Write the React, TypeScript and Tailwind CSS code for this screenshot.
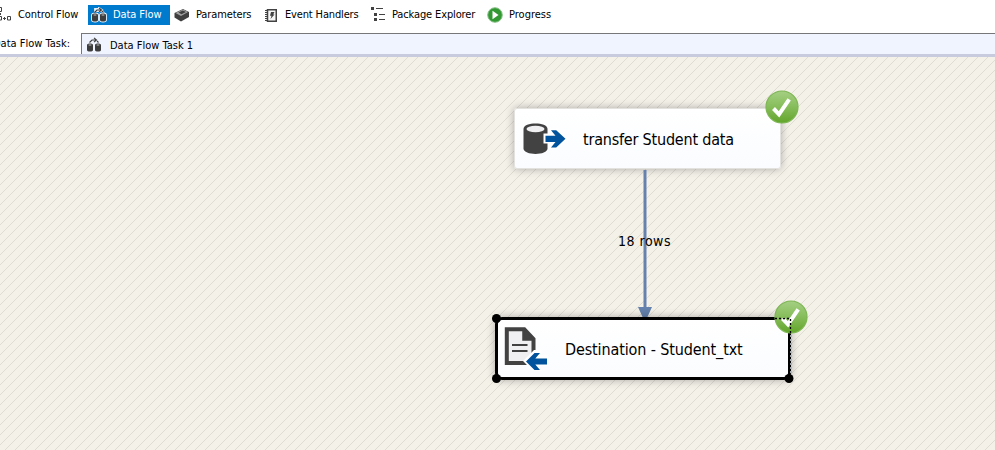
import type { ReactNode } from "react";

function ControlFlowIcon() {
  return (
    <svg width="12" height="18" viewBox="0 0 12 18" className="block shrink-0" fill="none" stroke="#424242">
      <path d="M-2 1.500H1.500v4H-2M7.500 10.500h3v3.500h-3zM-2 10.500H1.500v3.500H-2M3 12.500h3M4.500 11v3M.5 7v2" />
    </svg>
  );
}

function DataFlowIcon({ light = false }: { light?: boolean }) {
  return (
    <svg width="16" height="16" viewBox="0 0 16 16" className="block shrink-0">
      {light && (
        <path
          d="M1 8c0-2 6-2 6 0v5c0 2-6 2-6 0zM9 8c0-2 6-2 6 0v5c0 2-6 2-6 0zM4 5V2h4V1l3 2-3 2M11 4l2 2"
          fill="#e8f2fb"
          stroke="#e8f2fb"
          strokeWidth="1.800"
        />
      )}
      <path d="M1 8c0-2 6-2 6 0v5c0 2-6 2-6 0zM9 8c0-2 6-2 6 0v5c0 2-6 2-6 0z" fill="#3d3d3d" />
      <path d="M2 8c1-.8 3-.8 4 0-1 .6-3 .6-4 0zM10 8c1-.8 3-.8 4 0-1 .6-3 .6-4 0z" fill="#e4e4e4" />
      <path d="M3.500 5.500L6 3h4M8 .8L10.500 3 8 5.200M11 4l1.500 1.500" fill="none" stroke="#3d3d3d" strokeWidth="1.100" />
    </svg>
  );
}

function ParametersIcon() {
  return (
    <svg width="16" height="14" viewBox="0 0 16 14" className="block shrink-0">
      <path d="M.5 5L9 1l6 3v5L7 13.500.5 9.500z" fill="#3f3f3f" />
      <path d="M1.500 5L9 1.500l5 2.500L7 8z" fill="#a2a2a2" />
      <path d="M4.500 4.500l4.300-2L12 4 7.500 6.300z" fill="#3f3f3f" />
    </svg>
  );
}

function EventIcon() {
  return (
    <svg width="12" height="13" viewBox="0 0 12 13" className="block shrink-0">
      <path d="M2.500.75h8.750v11.500H2.500z" fill="#f5f5f5" stroke="#424242" strokeWidth="1.500" />
      <path d="M0 1.500h3M0 3.500h3M0 5.500h3M0 7.500h3M0 9.500h3M0 11.500h3" stroke="#424242" />
      <path d="M6 3h3.500L8.200 5.500H9.500L5.500 10l1-3.200H5z" fill="#424242" />
    </svg>
  );
}

function ExplorerIcon() {
  return (
    <svg width="14" height="16" viewBox="0 0 14 16" className="block shrink-0" fill="#424242" shapeRendering="crispEdges">
      <path d="M0 0h3v3H0zM5 1h7v1H5zM3 6h3v3H3zM8 7h6v1H8zM3 11h3v3H3zM8 12h6v1H8z" />
    </svg>
  );
}

function ProgressIcon() {
  return (
    <svg width="16" height="16" viewBox="0 0 16 16" className="block shrink-0">
      <circle cx="8" cy="8" r="7.300" fill="#329932" stroke="#8cc08c" strokeWidth="1" />
      <path d="M5.500 3.800v8.400L11.500 8z" fill="#fff" />
    </svg>
  );
}

function SuccessBadge({ id }: { id: string }) {
  return (
    <svg width="34" height="34" viewBox="0 0 34 34" className="block">
      <defs>
        <linearGradient id={id} x1="0" y1="0" x2="0" y2="1">
          <stop offset="0" stopColor="#a5cf83" />
          <stop offset=".5" stopColor="#86bd5a" />
          <stop offset="1" stopColor="#62a52b" />
        </linearGradient>
      </defs>
      <circle cx="17" cy="17" r="16" fill={`url(#${id})`} stroke="#7db653" strokeWidth="1.200" />
      <path d="M8.500 18.500l5.500 5.800L24.200 9.300" fill="none" stroke="#fff" strokeWidth="4" />
    </svg>
  );
}

function SourceIcon() {
  return (
    <svg width="44" height="34" viewBox="0 0 44 34" className="block shrink-0">
      <path d="M.5 7C.5-.2 24.500-.2 24.500 7v19.500c0 7.200-24 7.200-24 0z" fill="#424242" />
      <ellipse cx="12.500" cy="7" rx="9" ry="3.200" fill="#f0eff1" />
      <path d="M20.500 11.500h6.800L25 7h10l9 10-9 10H25l2.300-5.500h-6.800z" fill="#fff" />
      <path d="M22.500 13.700h10L28 8.200h5.200L42.500 16.700l-9.300 8.700H28l4.500-5.400h-10z" fill="#00539c" />
    </svg>
  );
}

function DestinationIcon() {
  return (
    <svg width="46" height="44" viewBox="0 0 46 44" className="block shrink-0">
      <path d="M2.800 2.300h17.500L29.500 12v24H2.800z" fill="#f0eff1" stroke="#424242" strokeWidth="4" />
      <path d="M19.500 2v10.500h10" fill="#424242" stroke="#424242" strokeWidth="2.500" />
      <path d="M8 18h15.500M8 24h15.500" stroke="#424242" strokeWidth="2.200" />
      <path d="M19 34l11-11h8l-3 5h9v11h-9l3 5H29z" fill="#fff" />
      <path d="M22 34.500l8.500-8.500h5.500l-4.700 5.500H43v6H31.300l4.700 5.500h-5.500z" fill="#00539c" />
    </svg>
  );
}

function Tab({ icon, label, className, labelClass }: { icon: ReactNode; label: string; className: string; labelClass: string }) {
  return (
    <div className={`flex h-5 shrink-0 items-center ${className}`}>
      {icon}
      <span className={`whitespace-nowrap ${labelClass}`}>{label}</span>
    </div>
  );
}

export default function App() {
  return (
    <div className="flex h-[450px] w-[995px] flex-col overflow-hidden bg-white text-black [font-stretch:condensed] [font-family:'DejaVu_Sans_Condensed','DejaVu_Sans',sans-serif]">
      <div className="flex h-[33px] shrink-0 pt-[5px] text-[11px] leading-[18px]">
        <Tab icon={<ControlFlowIcon />} label="Control Flow" className="w-[88px]" labelClass="ml-1.5 tracking-[-0.1px]" />
        <Tab icon={<DataFlowIcon light />} label="Data Flow" className="w-[82px] bg-[#007acc] pl-[3px] text-white" labelClass="ml-1.5 tracking-[-0.1px]" />
        <Tab icon={<ParametersIcon />} label="Parameters" className="w-[95px] pl-1" labelClass="ml-1.5 tracking-[-0.12px]" />
        <Tab icon={<EventIcon />} label="Event Handlers" className="w-[106px]" labelClass="ml-2 tracking-[-0.15px]" />
        <Tab icon={<ExplorerIcon />} label="Package Explorer" className="w-[116px]" labelClass="ml-[7px] tracking-[-0.13px]" />
        <Tab icon={<ProgressIcon />} label="Progress" className="" labelClass="ml-1.5" />
      </div>

      <div className="flex h-[21px] shrink-0 text-[11px]">
        <div className="flex w-[81px] shrink-0 items-center">
          <span className="-ml-[7px] whitespace-nowrap leading-[19px]">Data Flow Task:</span>
        </div>
        <div className="flex flex-1 items-center border-l border-t border-[#77777a] bg-[#f0f4fe] pl-1 pt-[3px]">
          <div className="pb-0.5"><DataFlowIcon /></div>
          <span className="ml-2 whitespace-nowrap pt-0.5">Data Flow Task 1</span>
        </div>
      </div>
      <div className="h-[3px] shrink-0 bg-[#c8cade]" />

      <div className="relative flex-1 overflow-hidden bg-[#f4f1e9]">
        <svg width="995" height="393" className="absolute inset-0 block">
          <defs>
            <pattern id="hatch" width="10" height="10" patternUnits="userSpaceOnUse">
              <path d="M-1 9L9 -1M8 10L10 8" stroke="#dfdcd4" strokeWidth="1" />
            </pattern>
          </defs>
          <rect width="995" height="393" fill="url(#hatch)" />
        </svg>

        <div className="absolute left-[514px] top-[51px] flex h-[61px] w-[267px] items-center rounded-[3px] border border-[#e4e2de] bg-gradient-to-b from-white to-[#fafcff] pl-2 shadow-[0_0_9px_rgba(0,0,0,0.3)]">
          <SourceIcon />
          <span className="ml-4 whitespace-nowrap pt-0.5 text-[16px] tracking-[-0.2px]">transfer Student data</span>
        </div>
        <div className="absolute left-[765px] top-[33px]"><SuccessBadge id="badge-source" /></div>

        <svg width="16" height="150" viewBox="0 0 16 150" className="absolute left-[637px] top-[113px] block">
          <path d="M8 0v139" stroke="#6482ad" strokeWidth="3" />
          <path d="M1 137h14l-5 11H6z" fill="#6482ad" />
        </svg>
        <span className="absolute left-[618px] top-[174px] whitespace-nowrap text-[14px] leading-5 tracking-[0.5px]">18 rows</span>

        <div className="absolute left-[495px] top-[260px] flex h-[63px] w-[296px] items-center rounded-[7px] border-[3px] border-black bg-gradient-to-b from-white to-[#fafcff] pl-1.5 shadow-[0_0_9px_rgba(0,0,0,0.3)]">
          <DestinationIcon />
          <span className="ml-[15px] whitespace-nowrap pt-0.5 text-[16px] tracking-[-0.12px]">Destination - Student_txt</span>
        </div>
        <div className="absolute left-[774px] top-[243px]"><SuccessBadge id="badge-destination" /></div>
        <svg width="310" height="80" viewBox="0 0 310 80" className="absolute left-[490px] top-[254px] block">
          <circle cx="6.500" cy="7.500" r="4.500" />
          <circle cx="6.500" cy="67.500" r="4.500" />
          <circle cx="299" cy="67.500" r="4.500" />
          <path d="M285 7.500h15.500v55" fill="none" stroke="#000" strokeWidth="1.300" strokeDasharray="2 2" />
          <path d="M300.500 24v40" stroke="#a4aab0" strokeDasharray="2 2" />
        </svg>
      </div>
    </div>
  );
}
